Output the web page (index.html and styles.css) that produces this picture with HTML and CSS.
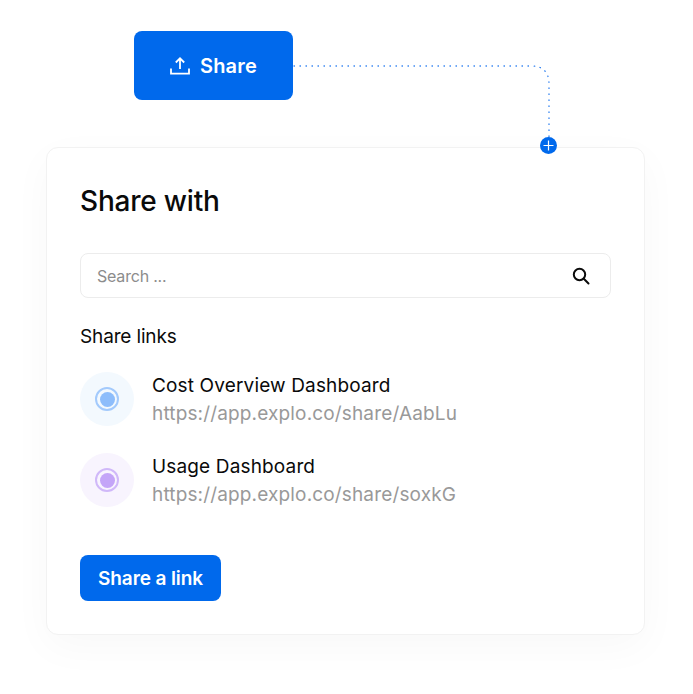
FILE: index.html
```html
<!DOCTYPE html>
<html lang="en">
<head>
    <meta charset="UTF-8">
    <meta name="viewport" content="width=device-width, initial-scale=1.0">
    <title>Share with</title>
    <link rel="stylesheet" href="styles.css">
</head>
<body>

<div class="stage">
    <button type="button" class="share-button">
        <svg class="share-icon" width="20" height="20" viewBox="0 0 20 20" fill="none" stroke="currentColor" stroke-width="1.8">
            <path d="M10 13V2.5M5.8 6.5L10 2.3l4.2 4.2M1 12.5v5.2h18v-5.2"/>
        </svg>
        Share
    </button>

    <svg class="connector" width="270" height="90" viewBox="0 0 270 90" fill="none">
        <path d="M1 1H238Q256 1 256 19V74" stroke="#2f80f0" stroke-width="1.3" stroke-linecap="round" stroke-dasharray="0.5 5.5"/>
    </svg>
    <div class="plus-badge">
        <svg width="17" height="17" viewBox="0 0 17 17" fill="none" stroke="#fff" stroke-width="1.2">
            <path d="M8.5 3.5v10M3.5 8.5h10"/>
        </svg>
    </div>

    <div class="card">
        <h1 class="card-title">Share with</h1>

        <div class="search">
            <span class="search-text">Search ...</span>
            <svg width="18" height="18" viewBox="0 0 18 18" fill="none" stroke="#0b0b0b" stroke-width="2">
                <circle cx="7.5" cy="7.5" r="5.7"/>
                <path d="M11.8 11.8L16.5 16.5" stroke-linecap="round"/>
            </svg>
        </div>

        <h2 class="links-title">Share links</h2>

        <div class="link-row">
            <div class="dot-icon dot-blue"><span class="dot-ring"><span class="dot-core"></span></span></div>
            <div class="link-info">
                <div class="link-name">Cost Overview Dashboard</div>
                <div class="link-url">https://app.explo.co/share/AabLu</div>
            </div>
        </div>

        <div class="link-row">
            <div class="dot-icon dot-purple"><span class="dot-ring"><span class="dot-core"></span></span></div>
            <div class="link-info">
                <div class="link-name">Usage Dashboard</div>
                <div class="link-url">https://app.explo.co/share/soxkG</div>
            </div>
        </div>

        <button type="button" class="link-button">Share a link</button>
    </div>
</div>

</body>
</html>
```

FILE: styles.css
```css
body {
    font-family: Inter, "Noto Sans", sans-serif;
    background-color: #fff;
    margin: 0;
    padding: 0;
}

.stage {
    position: relative;
    width: 693px;
    height: 694px;
    padding-top: 31px;
    box-sizing: border-box;
    overflow: hidden;
}

.share-button {
    display: flex;
    align-items: center;
    justify-content: center;
    gap: 10px;
    width: 159px;
    height: 69px;
    margin-left: 134px;
    padding: 0;
    background-color: #0069ec;
    color: #fff;
    border: none;
    border-radius: 8px;
    font-family: inherit;
    font-size: 20px;
    font-weight: 600;
    letter-spacing: 0.2px;
}

.connector {
    position: absolute;
    left: 293px;
    top: 65px;
}

.plus-badge {
    position: absolute;
    left: 540px;
    top: 137px;
    width: 17px;
    height: 17px;
    display: flex;
    background-color: #0069ec;
    border-radius: 50%;
    z-index: 2;
}

.card {
    position: relative;
    width: 599px;
    height: 488px;
    margin: 47px 0 0 46px;
    padding: 33px;
    box-sizing: border-box;
    background-color: #fff;
    border: 1px solid #f2f2f2;
    border-radius: 12px;
    box-shadow: 0 12px 40px rgba(0, 0, 0, 0.03);
}

.card-title {
    margin: 0;
    font-size: 28px;
    line-height: 40px;
    font-weight: 500;
    letter-spacing: -0.2px;
    color: #0a0a0a;
}

.search {
    display: flex;
    align-items: center;
    justify-content: space-between;
    height: 45px;
    margin-top: 32px;
    padding: 0 20px 0 16px;
    box-sizing: border-box;
    border: 1px solid #ececec;
    border-radius: 8px;
}

.search-text {
    font-size: 16px;
    letter-spacing: -0.2px;
    color: #8c8c8c;
}

.links-title {
    margin: 27px 0 23px;
    font-size: 19px;
    line-height: 24px;
    font-weight: 400;
    letter-spacing: -0.15px;
    color: #0a0a0a;
}

.link-row {
    display: flex;
    gap: 18px;
    height: 54px;
    margin-bottom: 27px;
}

.dot-icon {
    display: flex;
    align-items: center;
    justify-content: center;
    width: 54px;
    height: 54px;
    border-radius: 50%;
}

.dot-ring {
    display: flex;
    align-items: center;
    justify-content: center;
    width: 24px;
    height: 24px;
    box-sizing: border-box;
    border: 2px solid;
    border-radius: 50%;
}

.dot-core {
    width: 15px;
    height: 15px;
    border-radius: 50%;
}

.dot-blue { background-color: #f3f9fe; }
.dot-blue .dot-ring { border-color: #a3cafc; }
.dot-blue .dot-core { background-color: #8dbdfb; }

.dot-purple { background-color: #f8f4fe; }
.dot-purple .dot-ring { border-color: #d0b8f9; }
.dot-purple .dot-core { background-color: #c4a5f8; }

.link-name {
    font-size: 19px;
    line-height: 28px;
    letter-spacing: 0.15px;
    color: #0a0a0a;
}

.link-url {
    font-size: 19px;
    line-height: 28px;
    letter-spacing: 0.15px;
    color: #999;
}

.link-button {
    display: block;
    width: 141px;
    height: 46px;
    margin-top: 48px;
    padding: 0;
    background-color: #0069ec;
    color: #fff;
    border: none;
    border-radius: 8px;
    font-family: inherit;
    font-size: 19px;
    font-weight: 600;
    letter-spacing: -0.1px;
}
```
